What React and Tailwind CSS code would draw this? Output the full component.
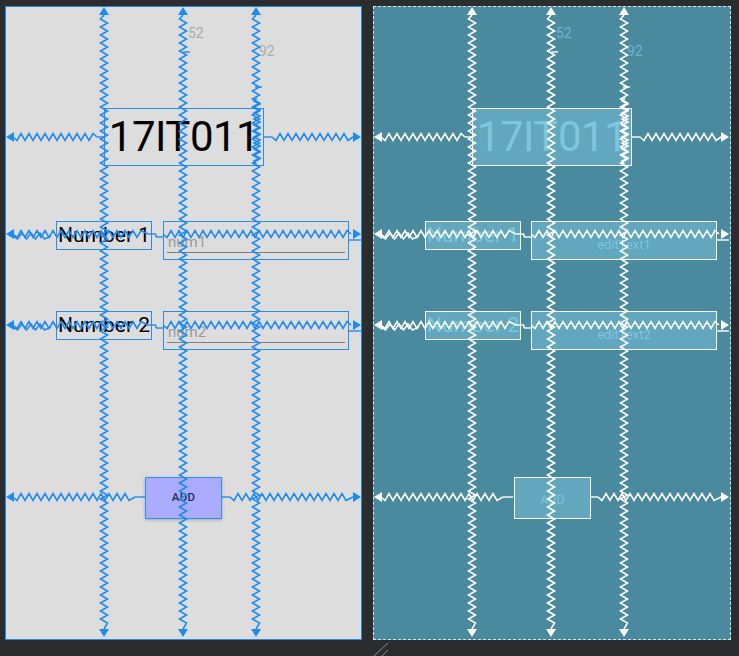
import React from "react";

function zig(x1, y1, x2, y2, amp = 3.5, half = 4) {
  const dx = x2 - x1, dy = y2 - y1;
  const len = Math.hypot(dx, dy);
  const ux = dx / len, uy = dy / len;
  const nx = -uy, ny = ux;
  const n = Math.floor(len / half);
  const pts = [[x1, y1]];
  for (let i = 1; i < n; i++) {
    const t = i * half;
    const s = (i % 2 ? 1 : -1) * amp;
    pts.push([x1 + ux * t + nx * s, y1 + uy * t + ny * s]);
  }
  pts.push([x2, y2]);
  return pts.map((p) => p[0].toFixed(1) + "," + p[1].toFixed(1)).join(" ");
}

function arrow(x, y, dir) {
  const a = 8, b = 5;
  let pts;
  if (dir === "up") pts = [[x, y], [x - b, y + a], [x + b, y + a]];
  else if (dir === "down") pts = [[x, y], [x - b, y - a], [x + b, y - a]];
  else if (dir === "left") pts = [[x, y], [x + a, y - b], [x + a, y + b]];
  else pts = [[x, y], [x - a, y - b], [x - a, y + b]];
  return pts.map((p) => p.join(",")).join(" ");
}

function Constraints({ color }) {
  const zigs = [];
  const lines = [];
  const arrows = [];
  [99, 178, 251].forEach((x) => {
    arrows.push(arrow(x, 1, "up"));
    zigs.push(zig(x, 9, x, 623));
    arrows.push(arrow(x, 631, "down"));
  });
  zigs.push(zig(252, 92, 252, 160, 3, 3));
  arrows.push(arrow(1, 131, "left"));
  zigs.push(zig(8, 131, 92, 131));
  lines.push([92, 131, 99, 131]);
  lines.push([259, 131, 267, 131]);
  zigs.push(zig(267, 131, 348, 131));
  arrows.push(arrow(356, 131, "right"));
  [228, 319].forEach((y) => {
    arrows.push(arrow(1, y, "left"));
    zigs.push(zig(8, y, 143, y));
    zigs.push(zig(8, y + 2, 46, y + 2, 3, 4.5));
    lines.push([143, y, 151, y]);
    lines.push([151, y, 151, y + 3]);
    lines.push([151, y + 3, 158, y + 3]);
    zigs.push(zig(158, y, 346, y));
    lines.push([344, y + 6, 356, y + 6]);
    arrows.push(arrow(356, y, "right"));
  });
  arrows.push(arrow(1, 491, "left"));
  zigs.push(zig(8, 491, 130, 491));
  lines.push([130, 491, 140, 491]);
  lines.push([217, 491, 225, 491]);
  zigs.push(zig(225, 491, 348, 491));
  arrows.push(arrow(356, 491, "right"));
  lines.push([178, 46, 185, 46]);
  lines.push([250, 81, 257, 81]);

  return (
    <svg className="absolute inset-0 pointer-events-none" width="358" height="634" viewBox="0 0 358 634">
      {zigs.map((p, i) => (
        <polyline key={"z" + i} points={p} fill="none" stroke={color} strokeWidth="1.6" strokeLinejoin="miter" />
      ))}
      {lines.map((l, i) => (
        <line key={"l" + i} x1={l[0]} y1={l[1]} x2={l[2]} y2={l[3]} stroke={color} strokeWidth="1.4" />
      ))}
      {arrows.map((p, i) => (
        <polygon key={"a" + i} points={p} fill={color} />
      ))}
    </svg>
  );
}

const font = { fontFamily: "Roboto, 'Noto Sans', sans-serif" };

function DesignPanel() {
  return (
    <div className="relative w-[357px] h-[634px] bg-[#dddddd] shadow-[inset_0_0_0_1px_#1f8af0]" style={font}>
      <span className="absolute left-[183px] top-[19px] text-[14px] leading-[16px] text-[#acacac]">52</span>
      <span className="absolute left-[254px] top-[37px] text-[14px] leading-[16px] text-[#acacac]">92</span>

      <div className="absolute left-[99px] top-[102px] w-[160px] h-[58px] shadow-[inset_0_0_0_1px_#2a8cf0] flex items-center justify-center">
        <span className="text-[42px] leading-none text-black tracking-[-0.5px]">17IT011</span>
      </div>

      {[215, 305].map((t, i) => (
        <React.Fragment key={t}>
          <div className={"absolute left-[51px] w-[96px] h-[29px] shadow-[inset_0_0_0_1px_#2a8cf0] flex items-center justify-center " + (i === 0 ? "top-[215px]" : "top-[305px]")}>
            <span className="text-[21px] leading-none text-black">{i === 0 ? "Number 1" : "Number 2"}</span>
          </div>
          <div className={"absolute left-[158px] w-[186px] h-[39px] shadow-[inset_0_0_0_1px_#2a8cf0] " + (i === 0 ? "top-[215px]" : "top-[305px]")}>
            <span className="absolute left-[5px] top-[12px] text-[15px] leading-[18px] text-[#9a9a9a]">{i === 0 ? "num1" : "num2"}</span>
            <div className="absolute left-[4px] right-[4px] top-[31px] h-[1px] bg-[#7d7d7d]" />
          </div>
        </React.Fragment>
      ))}

      <div className="absolute left-[140px] top-[471px] w-[77px] h-[42px] bg-[#aaaaff] shadow-[inset_0_0_0_1px_#2f90f2,0_1px_3px_rgba(0,0,0,0.25)] flex items-center justify-center">
        <span className="text-[11.5px] font-medium text-[#2a2a40] tracking-[0.3px]">ADD</span>
      </div>

      <Constraints color="#1f8af0" />
    </div>
  );
}

function BlueprintPanel() {
  return (
    <div className="relative w-[358px] h-[634px] bg-[#4a8a9e] border border-dashed border-[#d6e6eb]" style={font}>
      <span className="absolute left-[182px] top-[18px] text-[14px] leading-[16px] text-[#6fb6cc]">52</span>
      <span className="absolute left-[253px] top-[36px] text-[14px] leading-[16px] text-[#6fb6cc]">92</span>

      <div className="absolute left-[98px] top-[101px] w-[160px] h-[58px] border border-white bg-[#62a7bd] flex items-center justify-center">
        <span className="text-[42px] leading-none text-[#7cc6de] tracking-[-0.5px]">17IT011</span>
      </div>

      {[214, 304].map((t, i) => (
        <React.Fragment key={t}>
          <div className={"absolute left-[51px] w-[96px] h-[29px] border border-white bg-[#62a7bd] flex items-center justify-center " + (i === 0 ? "top-[214px]" : "top-[304px]")}>
            <span className="text-[21px] leading-none text-[#7cc6de]">{i === 0 ? "Number 1" : "Number 2"}</span>
          </div>
          <div className={"absolute left-[157px] w-[186px] h-[39px] border border-white bg-[#62a7bd] flex justify-center " + (i === 0 ? "top-[214px]" : "top-[304px]")}>
            <span className="mt-[15px] text-[13px] leading-[15px] text-[#7cc6de]">{i === 0 ? "editText1" : "editText2"}</span>
          </div>
        </React.Fragment>
      ))}

      <div className="absolute left-[140px] top-[470px] w-[77px] h-[42px] border border-white bg-[#62a7bd] flex items-center justify-center">
        <span className="mt-[4px] text-[12px] text-[#7cc6de] tracking-[0.3px]">ADD</span>
      </div>

      <div className="absolute -left-px -top-px">
        <Constraints color="#ffffff" />
      </div>
    </div>
  );
}

export default function App() {
  return (
    <div className="relative w-[739px] h-[656px] bg-[#2b2c2e] overflow-hidden">
      <div className="flex gap-[11px] pl-[5px] pt-[6px]">
        <DesignPanel />
        <BlueprintPanel />
      </div>
      <svg className="absolute left-[372px] top-[642px]" width="20" height="14" viewBox="0 0 20 14">
        <line x1="2" y1="14" x2="16" y2="1" stroke="#8a8a8a" strokeWidth="1" />
        <line x1="10" y1="14" x2="16" y2="8" stroke="#8a8a8a" strokeWidth="1" />
      </svg>
    </div>
  );
}
